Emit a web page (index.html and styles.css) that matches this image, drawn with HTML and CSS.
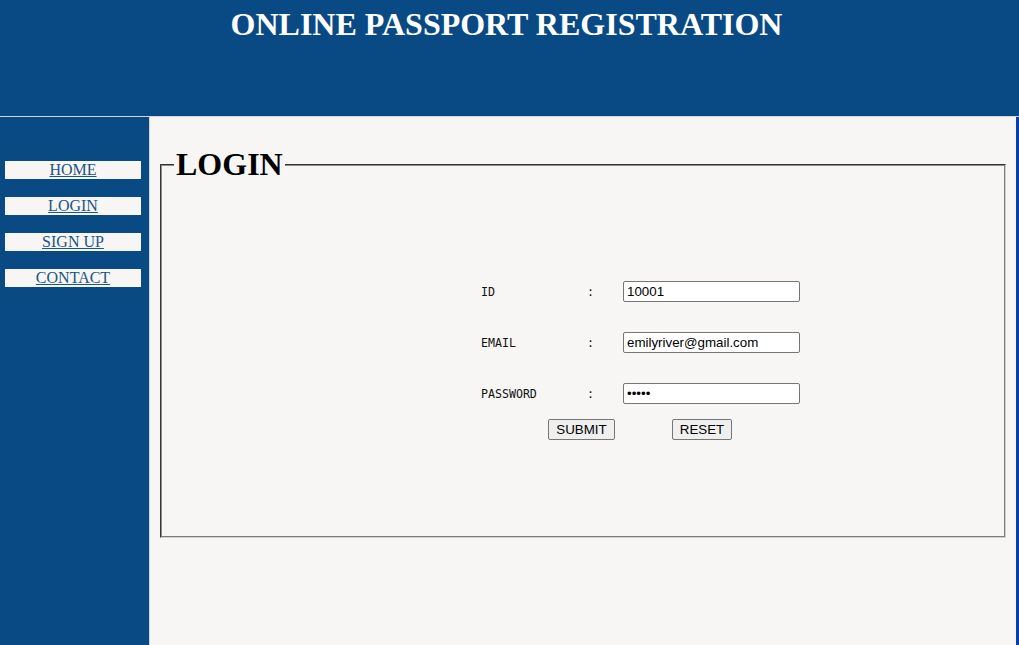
FILE: index.html
```html
<!DOCTYPE html>
<html>
<head>
<meta charset="utf-8">
<title>Online Passport Registration</title>
<link rel="stylesheet" href="styles.css">
</head>
<body>
<header class="top">
  <h1 class="title">ONLINE PASSPORT REGISTRATION</h1>
</header>
<div class="layout">
  <nav class="side">
    <a class="nav-item" href="#">HOME</a>
    <a class="nav-item" href="#">LOGIN</a>
    <a class="nav-item" href="#">SIGN UP</a>
    <a class="nav-item" href="#">CONTACT</a>
  </nav>
  <main class="content">
    <fieldset class="box">
      <legend class="box-title">LOGIN</legend>
      <form class="login">
        <div class="grid">
          <span class="lbl">ID</span><span class="colon">:</span><input class="field" type="text" value="10001">
          <span class="lbl">EMAIL</span><span class="colon">:</span><input class="field" type="text" value="emilyriver@gmail.com">
          <span class="lbl">PASSWORD</span><span class="colon">:</span><input class="field" type="password" value="12345">
        </div>
        <div class="buttons">
          <button class="btn btn-submit" type="button">SUBMIT</button>
          <button class="btn btn-reset" type="button">RESET</button>
        </div>
      </form>
    </fieldset>
  </main>
</div>
</body>
</html>
```
FILE: styles.css
```css
html, body {
  margin: 0;
  padding: 0;
  height: 100%;
}
body {
  background: #094a85;
  font-family: "Liberation Serif", "Times New Roman", serif;
  display: flex;
  flex-direction: column;
  overflow: hidden;
}
.top {
  height: 116px;
  border-bottom: 1px solid #d4d4d4;
  flex: none;
}
.title {
  margin: 6px 0 0;
  text-align: center;
  color: #ffffff;
  font-size: 32px;
  font-weight: bold;
  padding-right: 6px;
}
.layout {
  flex: 1;
  display: flex;
  border-right: 3px solid #0b3fa6;
}
.side {
  width: 149px;
  flex: none;
  display: flex;
  flex-direction: column;
  gap: 18px;
  padding-top: 44px;
  box-sizing: border-box;
}
.nav-item {
  display: block;
  margin-left: 5px;
  width: 136px;
  height: 18px;
  line-height: 18px;
  background: #f7f6f4;
  text-align: center;
  color: #1b5488;
  font-size: 16px;
}
.content {
  flex: 1;
  background: #f7f6f4;
  border-left: 1px solid #d4d4d4;
  padding: 29px 10px 0 10px;
}
.box {
  margin: 0;
  border: 2px groove #c0c0c0;
  border-color: #8a8a8a #d0d0d0 #d0d0d0 #8a8a8a;
  padding: 0 12px 96px;
}
.box-title {
  font-size: 32px;
  font-weight: bold;
  padding: 0 2px;
  color: #000;
}
.login {
  margin-left: 307px;
  padding-top: 98px;
}
.grid {
  display: grid;
  grid-template-columns: 106px 36px 177px;
  row-gap: 30px;
  align-items: center;
}
.lbl, .colon {
  font-family: "DejaVu Sans Mono", monospace;
  font-size: 11.6px;
  color: #111;
}
.field {
  box-sizing: border-box;
  width: 177px;
  height: 21px;
  border: 1px solid #767676;
  border-radius: 2px;
  padding: 1px 3px;
  font-family: "Liberation Sans", Arial, sans-serif;
  font-size: 13.33px;
  background: #fff;
  color: #000;
  margin: 0;
}
.buttons {
  display: flex;
  gap: 57px;
  margin-top: 15px;
  padding-left: 67px;
}
.btn {
  height: 21px;
  box-sizing: border-box;
  border: 1px solid #767676;
  border-radius: 2px;
  background: #efefef;
  padding: 0;
  font-family: "Liberation Sans", Arial, sans-serif;
  font-size: 13.33px;
  color: #000;
  margin: 0;
  text-align: center;
}
.btn-submit {
  width: 67px;
}
.btn-reset {
  width: 60px;
}
```
